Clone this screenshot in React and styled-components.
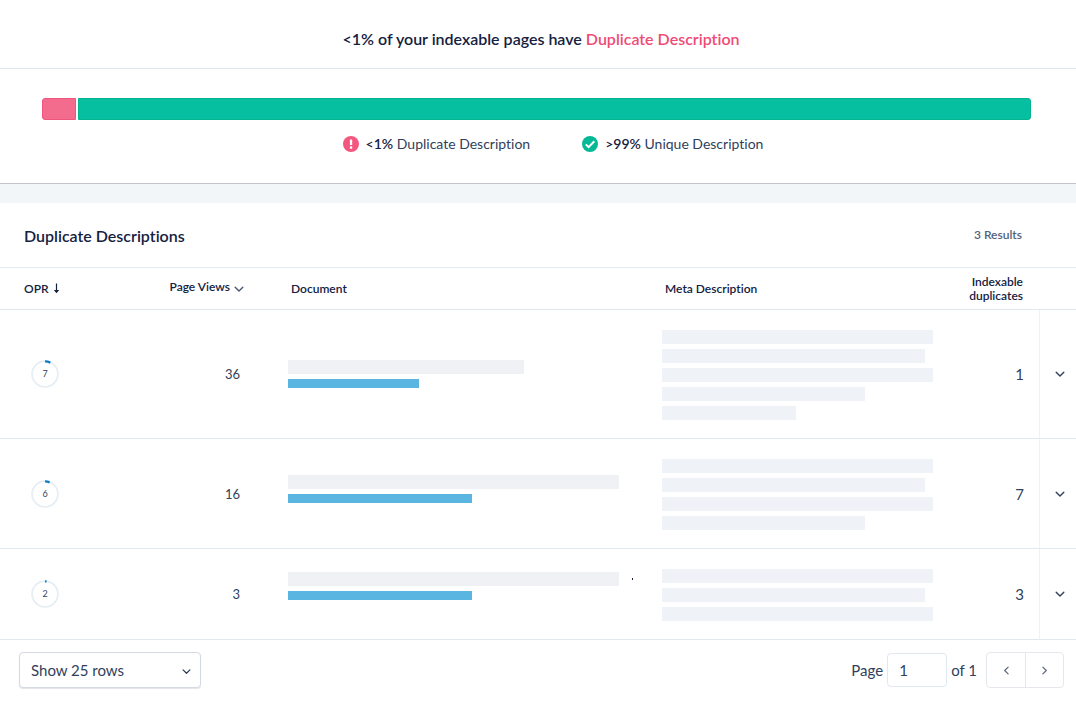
import styled, { createGlobalStyle } from "styled-components";

const rows = [
	{
		opr: 7,
		views: 36,
		title: 236,
		link: 131,
		lift: 0,
		meta: [271, 263, 271, 203, 134],
		duplicates: 1,
	},
	{
		opr: 6,
		views: 16,
		title: 331,
		link: 184,
		lift: 10,
		meta: [271, 263, 271, 203],
		duplicates: 7,
	},
	{
		opr: 2,
		views: 3,
		title: 331,
		link: 184,
		lift: 16,
		dot: true,
		meta: [271, 263, 271],
		duplicates: 3,
	},
];

export default function App() {
	return (
		<>
			<GlobalStyle />
			<Summary>
				<SummaryTitle>
					&lt;1% of your indexable pages have <span>Duplicate Description</span>
				</SummaryTitle>
				<Bar>
					<DuplicatePart />
					<UniquePart />
				</Bar>
				<Legend>
					<LegendItem>
						<AlertIcon />
						<p>
							<b>&lt;1%</b> Duplicate Description
						</p>
					</LegendItem>
					<LegendItem>
						<CheckIcon />
						<p>
							<b>&gt;99%</b> Unique Description
						</p>
					</LegendItem>
				</Legend>
			</Summary>
			<Results>
				<ResultsTop>
					<h2>Duplicate Descriptions</h2>
					<p>3 Results</p>
				</ResultsTop>
				<Table>
					<colgroup>
						<Col $width={100} />
						<Col $width={164} />
						<Col />
						<Col $width={301} />
						<Col $width={100} />
						<Col $width={37} />
					</colgroup>
					<thead>
						<tr>
							<HeadCell>
								<SortButton>
									OPR
									<ArrowDown />
								</SortButton>
							</HeadCell>
							<HeadCell $right>
								<SortButton $raised>
									Page Views
									<SortChevron>
										<Chevron size={10} />
									</SortChevron>
								</SortButton>
							</HeadCell>
							<HeadCell $indent>Document</HeadCell>
							<HeadCell $indent>Meta Description</HeadCell>
							<HeadCell $right $last>
								Indexable duplicates
							</HeadCell>
							<HeadCell aria-label="Expand" />
						</tr>
					</thead>
					<tbody>
						{rows.map((row) => (
							<Row key={row.opr} row={row} />
						))}
					</tbody>
				</Table>
				<Footer>
					<SelectBox>
						<select aria-label="Rows per page" defaultValue="25">
							<option value="25">Show 25 rows</option>
							<option value="50">Show 50 rows</option>
							<option value="100">Show 100 rows</option>
						</select>
						<Chevron size={9} />
					</SelectBox>
					<Pager>
						<label htmlFor="page">Page</label>
						<PageInput id="page" type="text" defaultValue="1" />
						<span>of 1</span>
						<PagerButtons>
							<button type="button" aria-label="Previous page">
								<Chevron size={9} turn={90} />
							</button>
							<button type="button" aria-label="Next page">
								<Chevron size={9} turn={-90} />
							</button>
						</PagerButtons>
					</Pager>
				</Footer>
			</Results>
		</>
	);
}

function Row({ row }) {
	return (
		<tr>
			<OprCell>
				<OprRing value={row.opr} />
			</OprCell>
			<NumberCell>{row.views}</NumberCell>
			<DocumentCell $lift={row.lift}>
				<TitleLine>
					<TitleBlock $width={row.title} />
					{row.dot && <Dot />}
				</TitleLine>
				<LinkBlock $width={row.link} />
			</DocumentCell>
			<MetaCell>
				<MetaLines>
					{row.meta.map((width, i) => (
						<MetaBlock key={i} $width={width} />
					))}
				</MetaLines>
			</MetaCell>
			<NumberCell $big>{row.duplicates}</NumberCell>
			<ExpandCell>
				<button type="button" aria-label="Show duplicates">
					<Chevron size={10} />
				</button>
			</ExpandCell>
		</tr>
	);
}

function OprRing({ value }) {
	return (
		<Ring>
			<svg width="28" height="28" viewBox="0 0 28 28" fill="none">
				<circle cx="14" cy="14" r="12.9" stroke="#e6eef4" strokeWidth="1.8" />
				<circle
					cx="14"
					cy="14"
					r="12.6"
					stroke="#0b7fcb"
					strokeWidth="2.4"
					pathLength="100"
					strokeDasharray={`${value} 100`}
					transform="rotate(-90 14 14)"
				/>
			</svg>
			<span>{value}</span>
		</Ring>
	);
}

function Chevron({ size, turn = 0 }) {
	return (
		<svg width={size} height={size} viewBox="0 0 10 10" fill="none">
			<path
				d="M1.2 3.2 5 7l3.8-3.8"
				stroke="currentColor"
				strokeWidth="1.4"
				strokeLinecap="round"
				strokeLinejoin="round"
				transform={`rotate(${turn} 5 5)`}
			/>
		</svg>
	);
}

function ArrowDown() {
	return (
		<svg width="7" height="11" viewBox="0 0 7 11" fill="none">
			<path d="M3.5 .5v8" stroke="currentColor" strokeWidth="1.2" />
			<path d="M.8 7h5.4L3.5 10.2z" fill="currentColor" />
		</svg>
	);
}

function AlertIcon() {
	return (
		<svg width="16" height="16" viewBox="0 0 16 16">
			<circle cx="8" cy="8" r="8" fill="#f3577f" />
			<rect x="6.9" y="3.4" width="2.3" height="5.6" rx=".5" fill="#fff" />
			<rect x="6.9" y="10.3" width="2.3" height="2.4" rx=".5" fill="#fff" />
		</svg>
	);
}

function CheckIcon() {
	return (
		<svg width="16" height="16" viewBox="0 0 16 16" fill="none">
			<circle cx="8" cy="8" r="8" fill="#05b896" />
			<path d="m3.8 8.4 2.8 2.7 5.7-5.8" stroke="#fff" strokeWidth="2" />
		</svg>
	);
}

const GlobalStyle = createGlobalStyle`
	* {
		box-sizing: border-box;
		margin: 0;
		padding: 0;
	}

	body {
		background-color: #fff;
		color: #2f3f5c;
		font-family: "Lato", "Open Sans", sans-serif;
		font-size: 15px;
		font-variant-ligatures: none;
		line-height: 20px;
	}

	button {
		border: none;
		background: none;
		color: inherit;
		font: inherit;
		cursor: pointer;
	}

	svg {
		display: block;
		flex-shrink: 0;
	}
`;

const Summary = styled.section`
	padding-bottom: 29px;
	border-bottom: 1px solid #c3c5cc;
`;

const SummaryTitle = styled.h1`
	padding: 29px 0 19px 6px;
	border-bottom: 1px solid #dfe6ef;
	color: #14213f;
	font-size: 16px;
	font-weight: 600;
	line-height: 20px;
	text-align: center;

	span {
		color: #ef4b75;
	}
`;

const Bar = styled.div`
	display: flex;
	gap: 2px;
	height: 22px;
	margin: 29px 45px 14px 42px;
`;

const DuplicatePart = styled.div`
	width: 34px;
	border: 1px solid #f0567c;
	border-radius: 3px 0 0 3px;
	background-color: #f46c8d;
`;

const UniquePart = styled.div`
	flex: 1;
	border: 1px solid #06b391;
	border-radius: 0 3px 3px 0;
	background-color: #05bfa0;
`;

const Legend = styled.div`
	display: flex;
	justify-content: center;
	gap: 52px;
	padding-left: 30px;
	font-size: 14px;
`;

const LegendItem = styled.div`
	display: flex;
	align-items: center;
	gap: 7px;

	b {
		color: #14213f;
		font-weight: 600;
	}
`;

const Results = styled.section`
	border-top: 19px solid #f2f6f9;
`;

const ResultsTop = styled.div`
	display: flex;
	align-items: center;
	justify-content: space-between;
	height: 64px;
	padding: 0 54px 0 24px;

	h2 {
		padding-top: 2px;
		color: #14213f;
		font-size: 16px;
		font-weight: 600;
	}

	p {
		color: #53617a;
		font-size: 12px;
		font-weight: 600;
	}
`;

const Table = styled.table`
	width: 100%;
	table-layout: fixed;
	border-spacing: 0;
	border-top: 1px solid #e3ebf2;

	td,
	th {
		border-bottom: 1px solid #e1e8ef;
		vertical-align: middle;
	}
`;

const Col = styled.col`
	width: ${(props) => (props.$width ? `${props.$width}px` : "auto")};
`;

const HeadCell = styled.th`
	height: 42px;
	padding-left: ${(props) => (props.$indent ? 27 : 24)}px;
	padding-right: ${(props) => (props.$last ? 16 : props.$right ? 20 : 0)}px;
	color: #14213f;
	font-size: 12px;
	font-weight: 600;
	line-height: 14px;
	text-align: ${(props) => (props.$right ? "right" : "left")};
`;

const SortButton = styled.button`
	display: inline-flex;
	align-items: center;
	gap: 4px;
	padding-bottom: ${(props) => (props.$raised ? 4 : 0)}px;
	vertical-align: middle;
`;

const SortChevron = styled.span`
	padding-top: 4px;
	color: #4a5872;
`;

const OprCell = styled.td`
	padding-left: 31px;
`;

const Ring = styled.div`
	display: grid;
	place-items: center;
	width: 28px;

	svg,
	span {
		grid-area: 1 / 1;
	}

	span {
		font-size: 9px;
		line-height: 12px;
	}
`;

const NumberCell = styled.td`
	padding-right: ${(props) => (props.$big ? 15 : 24)}px;
	font-size: ${(props) => (props.$big ? 15 : 13)}px;
	text-align: right;
`;

const DocumentCell = styled.td`
	padding: 0 0 ${(props) => props.$lift}px 24px;
`;

const TitleLine = styled.div`
	display: flex;
	align-items: center;
	gap: 13px;
	margin-bottom: 5px;
`;

const TitleBlock = styled.div`
	width: ${(props) => props.$width}px;
	height: 14px;
	background-color: #f0f1f5;
`;

const Dot = styled.div`
	width: 1px;
	height: 2px;
	background-color: #14213f;
`;

const LinkBlock = styled.div`
	width: ${(props) => props.$width}px;
	height: 9px;
	background-color: #5bb5e1;
`;

const MetaCell = styled.td`
	padding: 20px 0 18px 24px;
`;

const MetaLines = styled.div`
	display: flex;
	flex-direction: column;
	gap: 5px;
`;

const MetaBlock = styled.div`
	width: ${(props) => props.$width}px;
	height: 14px;
	background-color: #eff3f8;
`;

const ExpandCell = styled.td`
	border-left: 1px solid #eef2f6;

	button {
		display: flex;
		justify-content: center;
		width: 100%;
		padding: 8px 0 8px 4px;
	}
`;

const Footer = styled.footer`
	display: flex;
	align-items: center;
	justify-content: space-between;
	padding: 12px 12px 20px 19px;
`;

const SelectBox = styled.div`
	position: relative;

	select {
		width: 182px;
		height: 36px;
		padding: 0 30px 0 11px;
		border: 1px solid #d5d9e1;
		border-radius: 4px;
		background-color: #fff;
		box-shadow: 0 1px 1px #e3e5ea;
		color: inherit;
		font: inherit;
		appearance: none;
	}

	svg {
		position: absolute;
		top: 15px;
		right: 10px;
		pointer-events: none;
	}
`;

const Pager = styled.div`
	display: flex;
	align-items: center;
	gap: 4px;
`;

const PageInput = styled.input`
	width: 60px;
	height: 34px;
	padding: 0 11px;
	border: 1px solid #e0e8f0;
	border-radius: 4px;
	background-color: #fff;
	color: inherit;
	font: inherit;
`;

const PagerButtons = styled.div`
	display: flex;
	height: 36px;
	margin-left: 5px;
	border: 1px solid #e4e8ec;
	border-radius: 4px;
	color: #5f6b80;

	button {
		display: flex;
		align-items: center;
		justify-content: center;
		width: 38px;
	}

	button + button {
		border-left: 1px solid #e4e8ec;
	}
`;
